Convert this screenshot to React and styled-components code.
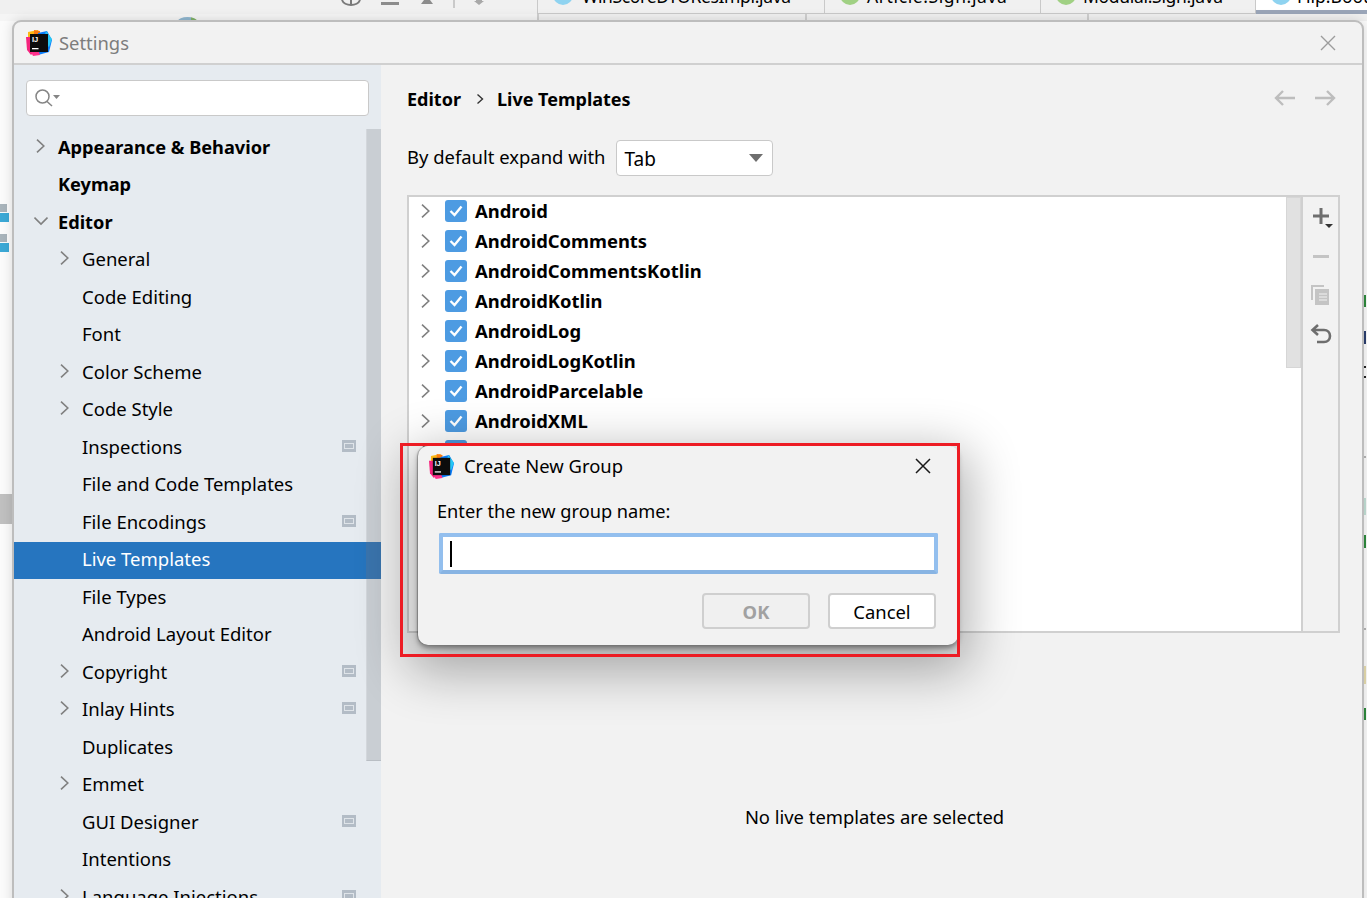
import React from "react";
import styled, { createGlobalStyle } from "styled-components";

const Global = createGlobalStyle`
  html, body { margin: 0; padding: 0; background: #fbfbfb; }
  body { font-family: "Noto Sans", "Open Sans", sans-serif; color: #000; overflow: hidden; }
  * { box-sizing: border-box; }
`;

const Desktop = styled.div`
  position: relative; width: 1367px; height: 898px; overflow: hidden; background: #fbfbfb;
`;
const IdeTop = styled.div`
  display: flex; height: 14px; background: #f0f0f0;
`;
const IdeTools = styled.div`
  width: 537px; flex: none; display: flex; align-items: flex-start; justify-content: flex-end; gap: 0; padding-right: 52px;
`;
const ToolStub = styled.span`display: flex; margin-left: ${p => p.$m || 0}px;`;
const IdeTab = styled.div`
  width: ${p => p.$w}px; height: 14px; flex: none; display: flex; align-items: flex-end; gap: ${p => p.$g}px;
  padding: 0 0 11px ${p => p.$p || 15}px;
  border-left: 1px solid #c9c9c9;
  font-size: 17.5px; line-height: 14px; letter-spacing: ${p => p.$ls || 0}px; overflow: hidden; white-space: nowrap;
  background: ${p => p.$active ? "#fff" : "#f0f0f0"};
  box-shadow: ${p => p.$active ? "inset 0 -4px 0 #9aa5b8" : "inset 0 -1px 0 #c9c9c9"};
`;
const TabDot = styled.span`
  width: 20px; height: 20px; border-radius: 50%; flex: none; margin-bottom: -2px; background: ${p => p.$c};
`;
const IdeStrip = styled.div`
  display: flex; height: 7px; background: #f5f5f5;
`;
const StripCell = styled.div`
  width: ${p => p.$w}px; flex: none; background: ${p => p.$dark ? "#f0f0f0" : "transparent"};
  border-left: ${p => p.$line ? "2px solid #cfcfcf" : "0"};
`;
const PeekBadge = styled.span`
  position: absolute; left: 178px; top: 17px; width: 19px; height: 8px; border-radius: 50% 50% 0 0;
  background: linear-gradient(90deg, #8fb6cf 70%, #7fb069 70%);
`;
const LeftGutter = styled.div`
  position: absolute; left: 0; top: 204px; width: 12px; display: flex; flex-direction: column; align-items: flex-start;
`;
const GutterBlock = styled.span`
  width: ${p => p.$w}px; height: ${p => p.$h}px; margin-top: ${p => p.$t || 0}px; background: ${p => p.$c}; flex: none;
`;
const RightGutter = styled.div`
  position: absolute; left: 1364px; top: 295px; width: 3px; display: flex; flex-direction: column;
`;
const Win = styled.div`
  position: absolute; left: 12px; top: 20px; width: 1352px; height: 900px;
  display: flex; flex-direction: column; background: #f2f2f2;
  border: 2px solid #bdbdbd; border-radius: 9px 9px 0 0;
  box-shadow: 0 0 12px rgba(0,0,0,.14);
`;
const TitleBar = styled.div`
  flex: none; height: 43px; display: flex; align-items: center; padding: 0 26px 0 12px; gap: 7px;
  border-bottom: 2px solid #d0d0d0;
  font-size: 18.4px; color: #7d7d7d;
`;
const Spacer = styled.div`flex: 1;`;
const Body = styled.div`flex: 1; display: flex; min-height: 0;`;
const Side = styled.div`
  position: relative; width: 367px; flex: none; background: #e6ebf0; padding-top: 15px;
`;
const Search = styled.div`
  margin: 0 12px 0 12px; height: 36px; background: #fff; border: 1px solid #c9c9c9; border-radius: 4px;
  display: flex; align-items: center; padding-left: 7px;
`;
const Tree = styled.div`padding-top: 13px;`;
const Row = styled.div`
  position: relative; height: 37.5px; display: flex; align-items: center; padding-bottom: 2px;
  padding-left: ${p => p.$l ? 44 : 68}px; white-space: nowrap;
  font-size: ${p => p.$l ? 18.2 : 18.5}px;
  font-weight: ${p => p.$l ? 700 : 400};
  ${p => p.$sel && "background:#2675bf;color:#fff;"}
  ${p => !p.$l && "&:nth-child(even) { padding-bottom: 3.5px; }"}
`;
const Arrow = styled.span`
  position: absolute; left: ${p => p.$l ? 20 : 44}px; top: calc(50% - 2px); transform: translateY(-50%);
  display: flex; width: 14px; height: 14px;
`;
const ProjectMark = styled.span`
  position: absolute; left: 328px; top: calc(50% - 2px); transform: translateY(-50%); display: flex;
`;
const ScrollThumb = styled.div`
  position: absolute; right: 0; top: 64px; width: 15px; height: 632px; background: #c9ced3; border-bottom: 1px solid #b9bec4;
  border-left: 1px solid #d3d7dc;
`;
const SelOver = styled.div`
  position: absolute; right: 0; top: 477px; width: 15px; height: 37px; background: #3a74ad;
`;
const Main = styled.div`
  flex: 1; position: relative; padding: 0 12px 0 26px; display: flex; flex-direction: column;
`;
const Crumb = styled.div`
  height: 69px; display: flex; align-items: center; padding-bottom: 2px; font-size: 18px; font-weight: 700; white-space: nowrap;
`;
const CrumbSep = styled.span`display: flex; margin: 0 10px 0 12px;`;
const ExpandRow = styled.div`
  height: 36px; margin-top: 6px; display: flex; align-items: center; gap: 10px; font-size: 18.45px; white-space: nowrap;
`;
const ExpandLabel = styled.span`margin-bottom: 3px;`;
const Select = styled.div`
  width: 157px; height: 36px; background: #fff; border: 1px solid #c9c9c9; border-radius: 4px;
  display: flex; align-items: center; justify-content: space-between; padding: 2px 9px 0 8px; font-size: 19px;
`;
const Caret = styled.span`
  width: 0; height: 0; border-left: 7px solid transparent; border-right: 7px solid transparent; border-top: 8px solid #6e6e6e;
  margin-top: -2px;
`;
const TreePanel = styled.div`
  margin-top: 19px; width: 933px; height: 438px; display: flex; background: #fff; border: 2px solid #d0d0d0;
`;
const List = styled.div`flex: 1; margin-top: -1px; overflow: hidden;`;
const GroupRow = styled.div`
  height: 30px; display: flex; align-items: center; padding-left: 10px; gap: 8px;
  font-size: 18.4px; font-weight: 700; white-space: nowrap;
`;
const GroupName = styled.span`margin-bottom: 2px;`;
const Check = styled.span`
  width: 22px; height: 22px; border-radius: 3px; background: #4d9be2; display: flex; align-items: center; justify-content: center; flex: none;
  margin-left: 4px;
`;
const PanelScroll = styled.div`
  width: 15px; flex: none; background: #fff;
`;
const PanelThumb = styled.div`
  height: 171px; background: #e1e1e1; border: 1px solid #d6d6d6;
`;
const ToolCol = styled.div`
  width: 37px; flex: none; background: #f2f2f2; border-left: 2px solid #d0d0d0;
  display: flex; flex-direction: column; align-items: center; padding-top: 9px; gap: 17px;
`;
const Tool = styled.span`display: flex; width: 24px; height: 22px; align-items: center; justify-content: center;`;
const Empty = styled.div`
  flex: 1; display: flex; justify-content: center; padding: 171px 0 0 18px; margin-left: -26px;
  font-size: 18.4px; white-space: nowrap;
`;
const Nav = styled.div`
  position: absolute; right: 26px; top: 25px; display: flex; gap: 20px;
`;
const Dialog = styled.div`
  position: absolute; left: 418px; top: 446px; width: 540px; height: 199px; background: #f2f2f2; border-radius: 10px 8px 10px 10px;
  box-shadow: 0 16px 50px 12px rgba(0,0,0,.3), 0 3px 5px rgba(0,0,0,.38), -1px 0 1px rgba(0,0,0,.25);
  display: flex; flex-direction: column; padding: 0 22px 0 19px;
`;
const Highlight = styled.div`
  position: absolute; left: 400px; top: 443px; width: 560px; height: 214px; border: 3px solid #ed1c24;
`;
const DlgTitle = styled.div`
  height: 38px; margin: 2px 0 0 -8px; display: flex; align-items: center; gap: 10px; padding-bottom: 2px; font-size: 18.4px; white-space: nowrap;
`;
const DlgName = styled.span`margin-bottom: 2px;`;
const DlgLabel = styled.div`
  margin-top: 11px; height: 28px; display: flex; align-items: center; font-size: 18.2px; white-space: nowrap;
`;
const NameInput = styled.div`
  margin: 8px -2px 0 2px; height: 41px; background: #fff; border: 4px solid #93bfee; border-bottom-color: #88b4e3; border-radius: 2px;
  display: flex; align-items: center; padding-left: 7px;
`;
const Cursor = styled.span`width: 2px; height: 26px; background: #000;`;
const Buttons = styled.div`
  margin-top: 19px; display: flex; justify-content: flex-end; gap: 18px;
`;
const Btn = styled.div`
  width: 108px; height: 36px; border-radius: 4px; display: flex; align-items: center; justify-content: center;
  font-size: 18.4px; border: 2px solid #cfcfcf;
  ${p => p.$off ? "background:#f0f0f0;color:#a1a1a1;font-weight:700;" : "background:#fff;color:#000;"}
`;
const DlgClose = styled.span`
  position: absolute; right: 27px; top: 12px; display: flex;
`;

const Logo = ({ s = 26 }) => (
  <svg width={s} height={s} viewBox="0 0 26 26">
    <path d="M2 2 L12 0 L14 8 L2 11Z" fill="#fcb712" />
    <path d="M8 0 L14 1 L14 6 L8 6Z" fill="#f97a12" />
    <path d="M0 7 L6 7 L8 22 L5 25 L1 20Z" fill="#f5247d" />
    <path d="M12 3 L21 1 L26 10 L23 22 L12 25Z" fill="#087cfa" />
    <path d="M20 1 L26 9 L23 17 L17 12Z" fill="#26c6f5" />
    <path d="M4 20 L12 19 L14 25 L7 26Z" fill="#ff318c" />
    <rect x="4" y="4" width="18" height="18" fill="#0c0c0c" />
    <text x="6" y="12" fontFamily="'Liberation Sans', sans-serif" fontWeight="700" fontSize="7.5" fill="#fff">IJ</text>
    <rect x="6" y="18" width="6.5" height="1.3" fill="#fff" />
  </svg>
);
const Chev = ({ down, c = "#808080" }) => (
  <svg width="14" height="14" viewBox="0 0 14 14" fill="none" stroke={c} strokeWidth="1.6">
    {down ? <path d="M0.5 3.5 L7 10 L13.5 3.5" /> : <path d="M3 0.7 L9.8 7 L3 13.3" />}
  </svg>
);
const Mark = () => (
  <svg width="14" height="12" viewBox="0 0 14 12">
    <rect width="14" height="12" fill="#b3bcc6" />
    <rect x="2" y="3" width="10" height="6" fill="#dfe4e9" />
    <rect x="3" y="4" width="8" height="4" fill="#b3bcc6" />
  </svg>
);
const CheckMark = () => (
  <svg width="14" height="12" viewBox="0 0 14 12" fill="none" stroke="#fff" strokeWidth="2.4"><path d="M1.5 6 L5.5 10 L12.5 1.5" /></svg>
);

const rows = [
  { t: "Appearance & Behavior", l: 1, a: "r" },
  { t: "Keymap", l: 1 },
  { t: "Editor", l: 1, a: "d" },
  { t: "General", a: "r" },
  { t: "Code Editing" },
  { t: "Font" },
  { t: "Color Scheme", a: "r" },
  { t: "Code Style", a: "r" },
  { t: "Inspections", m: 1 },
  { t: "File and Code Templates" },
  { t: "File Encodings", m: 1 },
  { t: "Live Templates", sel: 1 },
  { t: "File Types" },
  { t: "Android Layout Editor" },
  { t: "Copyright", a: "r", m: 1 },
  { t: "Inlay Hints", a: "r", m: 1 },
  { t: "Duplicates" },
  { t: "Emmet", a: "r" },
  { t: "GUI Designer", m: 1 },
  { t: "Intentions" },
  { t: "Language Injections", a: "r", m: 1 },
];
const groups = ["Android", "AndroidComments", "AndroidCommentsKotlin", "AndroidKotlin", "AndroidLog", "AndroidLogKotlin", "AndroidParcelable", "AndroidXML", "AndroidX"];
const rightMarks = [
  { h: 12, c: "#2e8b3d" }, { t: 24, h: 13, c: "#2b3f6f" }, { t: 22, h: 2, c: "#222" }, { t: 8, h: 2, c: "#222" },
  { t: 78, h: 2, c: "#b5b5b5" }, { t: 40, h: 17, c: "#c3e0d6" }, { t: 20, h: 13, c: "#2e8b3d" },
  { t: 80, h: 2, c: "#b5b5b5" }, { t: 36, h: 18, c: "#e6dcae" }, { t: 24, h: 12, c: "#2e8b3d" },
];

export default function App() {
  return (
    <Desktop>
      <Global />
      <IdeTop>
        <IdeTools>
          <ToolStub>
            <svg width="20" height="6" viewBox="0 0 20 6" fill="none" stroke="#7a7a7a" strokeWidth="2"><path d="M1 0C2 3 6 5 10 5C14 5 18 3 19 0M10 0V5" /></svg>
          </ToolStub>
          <ToolStub $m={20}><svg width="18" height="6" viewBox="0 0 18 6"><rect y="2" width="18" height="3" fill="#8c8c8c" /></svg></ToolStub>
          <ToolStub $m={22}><svg width="12" height="4" viewBox="0 0 12 4"><path d="M3 0h6l3 4H0z" fill="#8c8c8c" /></svg></ToolStub>
          <ToolStub $m={20}><svg width="2" height="8" viewBox="0 0 2 8"><rect width="2" height="8" fill="#c9c9c9" /></svg></ToolStub>
          <ToolStub $m={18}><svg width="12" height="5" viewBox="0 0 12 5"><path d="M3 0h6v1h2L6 5 1 1h2z" fill="#a8a8a8" /></svg></ToolStub>
        </IdeTools>
        <IdeTab $w={287} $g={9} $ls={-0.35}><TabDot $c="#8fd3f0" />WinScoreDTOResImpl.java</IdeTab>
        <IdeTab $w={216} $g={7} $ls={0.6}><TabDot $c="#a0d083" />Article.Sign.java</IdeTab>
        <IdeTab $w={215} $g={7} $ls={-0.3}><TabDot $c="#a0d083" />Modular.Sign.java</IdeTab>
        <IdeTab $w={112} $active $g={6}><TabDot $c="#8fd3f0" />Flip.Boot.java</IdeTab>
      </IdeTop>
      <IdeStrip>
        <StripCell $w={537} />
        <StripCell $w={268} $dark $line />
        <StripCell $w={282} $dark $line />
        <StripCell $w={280} $dark $line />
      </IdeStrip>
      <PeekBadge />
      <LeftGutter>
        <GutterBlock $w={7} $h={8} $c="#a9b4bb" />
        <GutterBlock $w={9} $h={9} $t={1} $c="#3ca9d6" />
        <GutterBlock $w={7} $h={8} $t={12} $c="#a9b4bb" />
        <GutterBlock $w={9} $h={9} $t={1} $c="#3ca9d6" />
        <GutterBlock $w={12} $h={30} $t={242} $c="#c0c0c0" />
      </LeftGutter>
      <RightGutter>
        {rightMarks.map((m, i) => <GutterBlock key={i} $w={2} $h={m.h} $t={m.t} $c={m.c} />)}
      </RightGutter>
      <Win>
        <TitleBar>
          <Logo />
          Settings
          <Spacer />
          <svg width="16" height="16" viewBox="0 0 16 16" stroke="#9c9c9c" strokeWidth="1.4"><path d="M1 1L15 15M15 1L1 15" /></svg>
        </TitleBar>
        <Body>
          <Side>
            <Search>
              <svg width="26" height="20" viewBox="0 0 26 20" fill="none" stroke="#858585" strokeWidth="1.5">
                <circle cx="8.5" cy="8.5" r="6.5" /><path d="M13 13.5L18 18" />
                <path d="M19 7h7l-3.5 4z" fill="#858585" stroke="none" />
              </svg>
            </Search>
            <ScrollThumb />
            <Tree>
              {rows.map(r => (
                <Row key={r.t} $l={r.l} $sel={r.sel}>
                  {r.a && <Arrow $l={r.l}><Chev down={r.a === "d"} /></Arrow>}
                  {r.t}
                  {r.m && <ProjectMark><Mark /></ProjectMark>}
                </Row>
              ))}
            </Tree>
            <SelOver />
          </Side>
          <Main>
            <Crumb>
              Editor
              <CrumbSep><svg width="14" height="12" viewBox="0 0 14 12" fill="none" stroke="#333" strokeWidth="1.4"><path d="M4.5 1.5L9.5 6L4.5 10.5" /></svg></CrumbSep>
              Live Templates
            </Crumb>
            <Nav>
              <svg width="21" height="16" viewBox="0 0 21 16" fill="none" stroke="#bdbdbd" strokeWidth="2.4"><path d="M21 8H2M9 1L2 8L9 15" /></svg>
              <svg width="21" height="16" viewBox="0 0 21 16" fill="none" stroke="#bdbdbd" strokeWidth="2.4"><path d="M0 8H19M12 1L19 8L12 15" /></svg>
            </Nav>
            <ExpandRow><ExpandLabel>By default expand with</ExpandLabel> <Select>Tab<Caret /></Select></ExpandRow>
            <TreePanel>
              <List>
                {groups.map(g => (
                  <GroupRow key={g}><Chev /><Check><CheckMark /></Check><GroupName>{g}</GroupName></GroupRow>
                ))}
              </List>
              <PanelScroll><PanelThumb /></PanelScroll>
              <ToolCol>
                <Tool>
                  <svg width="24" height="24" viewBox="0 0 24 24" fill="none">
                    <path d="M12 3V19M4 11H20" stroke="#6e6e6e" strokeWidth="3" />
                    <path d="M16 19h8l-4 4z" fill="#333" />
                  </svg>
                </Tool>
                <Tool>
                  <svg width="16" height="3" viewBox="0 0 16 3"><rect width="16" height="3" fill="#c4c4c4" /></svg>
                </Tool>
                <Tool>
                  <svg width="19" height="21" viewBox="0 0 19 21">
                    <path d="M0 0H13V2H2V15H0Z" fill="#c4c4c4" />
                    <path d="M4 4H18V20H4Z" fill="#c4c4c4" />
                    <path d="M8 9H16M8 12H16M8 15H16" stroke="#f2f2f2" strokeWidth="1.2" />
                  </svg>
                </Tool>
                <Tool>
                  <svg width="22" height="22" viewBox="0 0 22 22" fill="none" stroke="#6e6e6e" strokeWidth="2.6">
                    <path d="M8 2L2.5 7L8 12" />
                    <path d="M3 7H14C17.5 7 20 9.5 20 13C20 16.5 17.5 19 14 19H7" />
                  </svg>
                </Tool>
              </ToolCol>
            </TreePanel>
            <Empty>No live templates are selected</Empty>
          </Main>
        </Body>
      </Win>
      <Dialog>
        <DlgTitle><Logo s={25} /><DlgName>Create New Group</DlgName></DlgTitle>
        <DlgClose><svg width="16" height="16" viewBox="0 0 16 16" stroke="#1a1a1a" strokeWidth="1.5"><path d="M1 1L15 15M15 1L1 15" /></svg></DlgClose>
        <DlgLabel>Enter the new group name:</DlgLabel>
        <NameInput><Cursor /></NameInput>
        <Buttons>
          <Btn $off>OK</Btn>
          <Btn>Cancel</Btn>
        </Buttons>
      </Dialog>
      <Highlight />
    </Desktop>
  );
}
